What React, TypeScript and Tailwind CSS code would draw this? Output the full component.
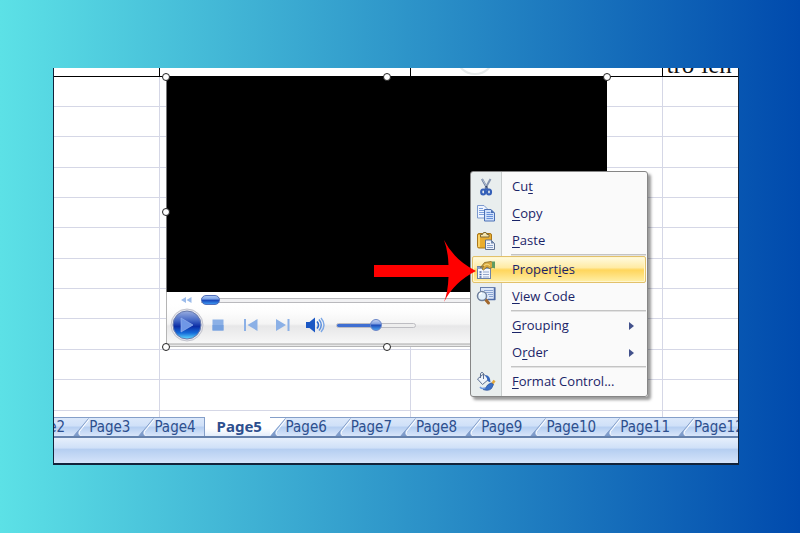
import type { ReactNode } from "react"

const rows = Array.from({ length: 11 }, (_, i) => i)

const handles = [
  "left-0 top-0",
  "left-1/2 top-0",
  "left-full top-0",
  "left-0 top-1/2",
  "left-full top-1/2",
  "left-0 top-full",
  "left-1/2 top-full",
  "left-full top-full",
]

const tabs = ["Page2", "Page3", "Page4", "Page5", "Page6", "Page7", "Page8", "Page9", "Page10", "Page11", "Page12"]

function CutIcon() {
  return (
    <svg viewBox="0 0 20 20" className="size-5 shrink-0" fill="none">
      <path d="M6 2l5.6 10" stroke="#66799b" strokeWidth="2" />
      <path d="M14.5 2L9 12" stroke="#8796b0" strokeWidth="2" />
      <path d="M6.4 2.4l4 7" stroke="#dfe6f2" strokeWidth=".7" />
      <circle cx="10.3" cy="9.8" r="1" fill="#34466f" />
      <ellipse cx="7.2" cy="15" rx="2" ry="2.5" stroke="#3560b8" strokeWidth="2.2" />
      <ellipse cx="13" cy="15" rx="2" ry="2.5" stroke="#3560b8" strokeWidth="2.2" />
      <path d="M9 12.2h2.6" stroke="#3560b8" strokeWidth="1.8" />
    </svg>
  )
}

function CopyIcon() {
  return (
    <svg viewBox="0 0 20 20" className="size-5 shrink-0">
      <path d="M1.5 1.5h6.5l3 3v9.500h-9.500z" fill="#eef4ff" stroke="#7d9ace" />
      <path d="M3 4.500h4M3 6.500h6M3 8.500h6M3 10.500h6" stroke="#7ea0dc" />
      <path d="M8.500 5.500h6.500l3.500 3.500v8h-10z" fill="#cfe0fb" stroke="#4b70b5" />
      <path d="M15 5.500v3.500h3.500z" fill="#4b70b5" />
      <path d="M10.500 8.500h4M10.500 10.500h6.500M10.500 12.500h6.500M10.500 14.500h6.500" stroke="#6890d8" />
    </svg>
  )
}

function PasteIcon() {
  return (
    <svg viewBox="0 0 20 20" className="size-5 shrink-0">
      <rect x="1.500" y="2.500" width="14" height="14.500" rx="1.500" fill="#e9ad2e" stroke="#a97719" />
      <path d="M3 4v12" stroke="#ffdf7c" strokeWidth="1.500" />
      <path d="M4.500 6V3.500h2L7.500 1.500h2.500l1 2h2V6z" fill="#f5e6b0" stroke="#7c6a3c" />
      <path d="M9.500 9h5.500l3.500 3.500v6h-9z" fill="#eef3fb" stroke="#5f7291" />
      <path d="M15 9v3.500h3.500z" fill="#7188ad" />
      <path d="M11 12.500h3M11 14.500h6M11 16.500h6" stroke="#8aa2c8" />
    </svg>
  )
}

function PropertiesIcon() {
  return (
    <svg viewBox="0 0 20 20" className="size-5 shrink-0">
      <rect x="1.500" y="6.500" width="13" height="12" fill="#f2f6fd" stroke="#6d83a8" />
      <path d="M1.500 8h13" stroke="#8da6cf" strokeWidth="2" />
      <path d="M3.500 12h2M3.500 14.500h2M3.500 17h2" stroke="#4668a8" strokeWidth="1.500" />
      <path d="M7 12h6M7 14.500h6M7 17h6" stroke="#93a7ca" />
      <path d="M4.500 7.500l4-5L15 1.500l1.500 1v5l-3 1-2.500-1.500-3.500 3-1.500-1 1.500-2.500z" fill="#d9a93f" stroke="#806525" strokeWidth=".8" />
      <path d="M8 5.500l3-1.500 3 1.500" stroke="#fbe08b" fill="none" />
      <path d="M16 1.500h3v7l-3-1z" fill="#5f9b62" />
    </svg>
  )
}

function ViewCodeIcon() {
  return (
    <svg viewBox="0 0 20 20" className="size-5 shrink-0">
      <rect x="4.500" y=".5" width="14.500" height="12" fill="#dce7f8" stroke="#6880ae" />
      <path d="M8 3.500h9M10 5.500h7M12 7.500h5M13 9.500h4" stroke="#8ba5d2" />
      <path d="M18.500 1v11.500H12" fill="none" stroke="#4f6ca6" strokeWidth="1.500" />
      <path d="M9.500 12.500l3 3.500" stroke="#a1672d" strokeWidth="3" strokeLinecap="round" />
      <circle cx="6" cy="9" r="4.500" fill="#e3f1fb" stroke="#70819d" strokeWidth="1.500" />
      <path d="M3.500 8.500a2.500 2.500 0 012.500-2.500" stroke="#fff" strokeWidth="1.300" fill="none" />
    </svg>
  )
}

function FormatIcon() {
  return (
    <svg viewBox="0 0 20 20" className="size-5 shrink-0">
      <path d="M1.500 7l6-5 5.500 5-6.500 5.500z" fill="#eef3fb" stroke="#5c6f92" />
      <path d="M4.500 6V1.500q1.500-2.500 3 0V7" fill="none" stroke="#5c6f92" />
      <path d="M9 3q5.500 0 5.500 7.500L11.500 9q0-3-2.500-6z" fill="#3768bd" />
      <path d="M18.500 8.500l-4 6" stroke="#e4a83b" strokeWidth="2.500" />
      <path d="M15.500 11l2 1.500-2 4q-3 3-8.500 1 2.500-.5 3.500-3t5-3.500z" fill="#3c70c8" stroke="#274f98" strokeWidth=".7" />
      <path d="M4 15q2 2.500 5 1" stroke="#6d98df" strokeWidth="1.500" fill="none" />
    </svg>
  )
}

type MenuEntry = {
  before: string
  hotkey: string
  after: string
  icon?: ReactNode
  submenu?: boolean
  active?: boolean
  divider?: boolean
}

const menu: MenuEntry[] = [
  { before: "Cu", hotkey: "t", after: "", icon: <CutIcon /> },
  { before: "", hotkey: "C", after: "opy", icon: <CopyIcon /> },
  { before: "", hotkey: "P", after: "aste", icon: <PasteIcon /> },
  { before: "Propert", hotkey: "i", after: "es", icon: <PropertiesIcon />, active: true, divider: true },
  { before: "", hotkey: "V", after: "iew Code", icon: <ViewCodeIcon /> },
  { before: "", hotkey: "G", after: "rouping", submenu: true, divider: true },
  { before: "O", hotkey: "r", after: "der", submenu: true },
  { before: "", hotkey: "F", after: "ormat Control...", icon: <FormatIcon />, divider: true },
]

function ContextMenu() {
  return (
    <ul
      role="menu"
      className="absolute left-[416px] top-[103px] w-[178px] rounded-[3px] border border-[#868686] bg-[linear-gradient(to_right,#e9eeee_30px,#c9cdcd_30px,#c9cdcd_31px,#fafafa_31px)] p-px font-['Open_Sans',sans-serif] text-[13px] font-medium text-[#1a2468] shadow-[3px_3px_3px_rgba(0,0,0,0.4)]"
    >
      {menu.map((item) => (
        <li key={item.before + item.hotkey + item.after} role="none">
          {item.divider && <div className="ml-[39px] h-[2px] border-t border-[#c4c4c4] bg-[#e2e2e2]" />}
          <button
            type="button"
            role="menuitem"
            className={
              item.active
                ? "flex h-[27px] w-full items-center gap-4 rounded-[2px] border border-[#e2c16b] bg-[linear-gradient(#fffbe0,#ffeba5_42%,#ffd65c_52%,#ffdc70_65%,#fff0a8)] pl-[3px] text-left shadow-[inset_0_0_0_1px_#fff6cf]"
                : "flex h-[27px] w-full items-center gap-4 pl-1 text-left"
            }
          >
            {item.icon ?? <span className="size-5" />}
            <span className="flex-1 whitespace-nowrap">
              {item.before}
              <span className="underline underline-offset-2">{item.hotkey}</span>
              {item.after}
            </span>
            {item.submenu && (
              <svg viewBox="0 0 5 8" className="mr-3 h-2 w-[5px]">
                <path d="M0 0l5 4-5 4z" fill="#43528c" />
              </svg>
            )}
          </button>
        </li>
      ))}
    </ul>
  )
}

function MediaPlayer() {
  return (
    <div className="absolute left-[112px] top-[9px] w-[441px]">
      <div className="h-[215px] border-l border-[#777] bg-black" />
      <div className="h-[55px] border-x border-b border-[#b5b5b5] bg-[linear-gradient(#fff_12px,#fdfdfd_20px,#f4f4f4_32px,#e7e7e8_34px,#f7f7f7_51px,#aaa_52px,#e8e8e8_53px)]">
        <div className="flex h-[16px] items-center gap-2 pl-[13px]">
          <button type="button" aria-label="Rewind">
            <svg viewBox="0 0 13 8" className="h-2 w-[13px]" fill="#9bbbea">
              <path d="M6 1v6L1 4zM11.500 1v6l-5-3z" />
            </svg>
          </button>
          <input
            type="range"
            aria-label="Seek"
            defaultValue={0}
            className="h-[5px] flex-1 appearance-none border-y border-[#b9b9bd] bg-[#f1f1f3] [&::-webkit-slider-thumb]:h-[10px] [&::-webkit-slider-thumb]:w-[19px] [&::-webkit-slider-thumb]:appearance-none [&::-webkit-slider-thumb]:rounded-full [&::-webkit-slider-thumb]:border [&::-webkit-slider-thumb]:border-[#526fbb] [&::-webkit-slider-thumb]:bg-[linear-gradient(#a8c5f4,#7ba2e8_40%,#1440b5_50%,#3c94ef)]"
          />
        </div>
        <div className="flex h-[34px] items-center pl-[3px]">
          <button type="button" aria-label="Play">
            <svg viewBox="0 0 34 34" className="size-[34px]">
              <defs>
                <linearGradient id="play" x2="0" y2="1">
                  <stop offset="0" stopColor="#9aaee0" />
                  <stop offset=".35" stopColor="#4165c4" />
                  <stop offset=".55" stopColor="#0b2da5" />
                  <stop offset=".78" stopColor="#1569d8" />
                  <stop offset="1" stopColor="#62dcff" />
                </linearGradient>
              </defs>
              <circle cx="17" cy="17" r="16" fill="#e3e4ec" stroke="#c3c4cd" />
              <circle cx="17" cy="17" r="14" fill="url(#play)" stroke="#697bad" />
              <path d="M11 10L23 17 11 24z" fill="#6f97e6" stroke="#9db9f2" strokeWidth=".6" />
            </svg>
          </button>
          <button type="button" aria-label="Stop" className="ml-2">
            <svg viewBox="0 0 12 12" className="size-3">
              <path d="M.5.5h11v11H.5z" fill="#8bb0e6" />
              <path d="M.5 6h11v5.500H.5z" fill="#76a1df" />
            </svg>
          </button>
          <button type="button" aria-label="Previous" className="ml-5">
            <svg viewBox="0 0 14 12" className="h-3 w-[14px]" fill="#8bb0e6">
              <path d="M0 0h2v12H0zM13.500 0v12L3.500 6z" />
            </svg>
          </button>
          <button type="button" aria-label="Next" className="ml-[18px]">
            <svg viewBox="0 0 14 12" className="h-3 w-[14px]" fill="#8bb0e6">
              <path d="M11.500 0h2v12h-2zM0 0v12l10-6z" />
            </svg>
          </button>
          <button type="button" aria-label="Mute" className="ml-4">
            <svg viewBox="0 0 20 16" className="h-4 w-5" fill="none">
              <path d="M0 5h3.500L9 .5v15L3.500 11H0z" fill="#1a57c4" />
              <path d="M11 4.500q3 3.500 0 7" stroke="#2c68cc" strokeWidth="1.600" />
              <path d="M13 2.500q4.500 5.500 0 11" stroke="#5e91dd" strokeWidth="1.500" />
              <path d="M15 1q6 7 0 14" stroke="#7da8e6" strokeWidth="1.400" />
            </svg>
          </button>
          <input
            type="range"
            aria-label="Volume"
            defaultValue={50}
            className="ml-[10px] h-[5px] w-20 appearance-none rounded-full border border-[#bdbdc2] bg-[linear-gradient(to_right,#3f6fd2_50%,#eeeeee_50%)] [&::-webkit-slider-thumb]:size-3 [&::-webkit-slider-thumb]:appearance-none [&::-webkit-slider-thumb]:rounded-full [&::-webkit-slider-thumb]:border [&::-webkit-slider-thumb]:border-[#6985c8] [&::-webkit-slider-thumb]:bg-[linear-gradient(#c4d2f3,#7e9ee0_40%,#1c49b8_50%,#4ba0ee)]"
          />
        </div>
      </div>
      {handles.map((pos) => (
        <span
          key={pos}
          className={`absolute size-2 -translate-1/2 rounded-full border border-[#222] bg-white ${pos}`}
        />
      ))}
    </div>
  )
}

function Sheet() {
  return (
    <table className="h-[349px] w-full table-fixed border-collapse">
      <colgroup>
        <col className="w-[105px]" />
        <col className="w-[251px]" />
        <col className="w-[252px]" />
        <col />
      </colgroup>
      <tbody>
        <tr className="h-2 border-b border-black">
          <td className="border-r border-black p-0" />
          <td className="border-r border-black p-0" />
          <td className="border-r border-black p-0">
            <div className="flex h-[7px] items-end overflow-hidden pl-11">
              <div className="size-10 shrink-0 rounded-full border-2 border-[#e6eaea]" />
            </div>
          </td>
          <td className="p-0">
            <div className="flex h-[7px] items-end overflow-hidden pl-1 font-['Liberation_Serif',serif] text-[25px] leading-[20px] whitespace-nowrap text-[#111]">
              trở lên
            </div>
          </td>
        </tr>
        {rows.map((row) => (
          <tr key={row} className="border-b border-[#d5d7e6]">
            <td className="border-r border-[#d5d7e6] p-0" />
            <td className="border-r border-[#d5d7e6] p-0" />
            <td className="border-r border-[#d5d7e6] p-0" />
            <td className="p-0" />
          </tr>
        ))}
        <tr className="h-[7px]">
          <td className="border-r border-[#d5d7e6] p-0" />
          <td className="border-r border-[#d5d7e6] p-0" />
          <td className="border-r border-[#d5d7e6] p-0" />
          <td className="p-0" />
        </tr>
      </tbody>
    </table>
  )
}

function TabEdge({ afterActive }: { afterActive: boolean }) {
  return (
    <svg viewBox="0 0 16 19" className="h-[19px] w-4 shrink-0">
      {afterActive && <path d="M0-1h16L0 18z" fill="#fff" />}
      <path d="M0 18.500l5.500-6.500v3.500l3 3z" fill="#7d9bcb" />
      <path d="M1 18L15.500.5" stroke="#849fc9" />
      <path d="M9 18.500q-4-1-2.500-5L16.500 1" stroke="#fff" fill="none" />
    </svg>
  )
}

function SheetTabs() {
  return (
    <div className="flex h-[21px] overflow-hidden border-b-2 border-[#6682ad] font-['DejaVu_Sans_Condensed','DejaVu_Sans',sans-serif] text-[15px] leading-[19px] text-[#2d4f8e]">
      <div role="tablist" className="-ml-[46px] flex">
        {tabs.map((tab, i) =>
          tab === "Page5" ? (
            <button
              key={tab}
              type="button"
              role="tab"
              aria-selected="true"
              className="w-[66px] shrink-0 border-l border-[#849fc9] bg-[linear-gradient(#fff_60%,#e3edfb)] pl-3 text-left font-['Noto_Sans',sans-serif] font-bold"
            >
              {tab}
            </button>
          ) : (
            <button
              key={tab}
              type="button"
              role="tab"
              aria-selected="false"
              className="flex shrink-0 border-t border-[#849fc9] bg-[linear-gradient(#dbe8fa,#cfe0f8_45%,#b5cef1_50%,#d9e6fa)] pr-2"
            >
              <TabEdge afterActive={tabs[i - 1] === "Page5"} />
              {tab}
            </button>
          ),
        )}
      </div>
    </div>
  )
}

export default function App() {
  return (
    <div className="min-h-screen bg-[linear-gradient(to_right,#5ce1e6,#004aad)] pt-[68px] pr-[61px] pb-[68px] pl-[53px]">
      <div className="relative border-x border-b-2 border-[#12233a] bg-white">
        <Sheet />
        <SheetTabs />
        <div className="h-[25px] bg-[linear-gradient(#e6effc,#cfe0f8_40%,#b5cef1_45%,#d5e4fa)]" />

        <MediaPlayer />
        <ContextMenu />

        <svg viewBox="0 0 102 62" className="absolute left-[320px] top-[172px] h-[62px] w-[102px]">
          <path d="M0 25h74.500Q74 10 70 0q10 20 32 31-22 11-32 31 4-10 4.500-25H0z" fill="#f00" />
        </svg>
      </div>
    </div>
  )
}
